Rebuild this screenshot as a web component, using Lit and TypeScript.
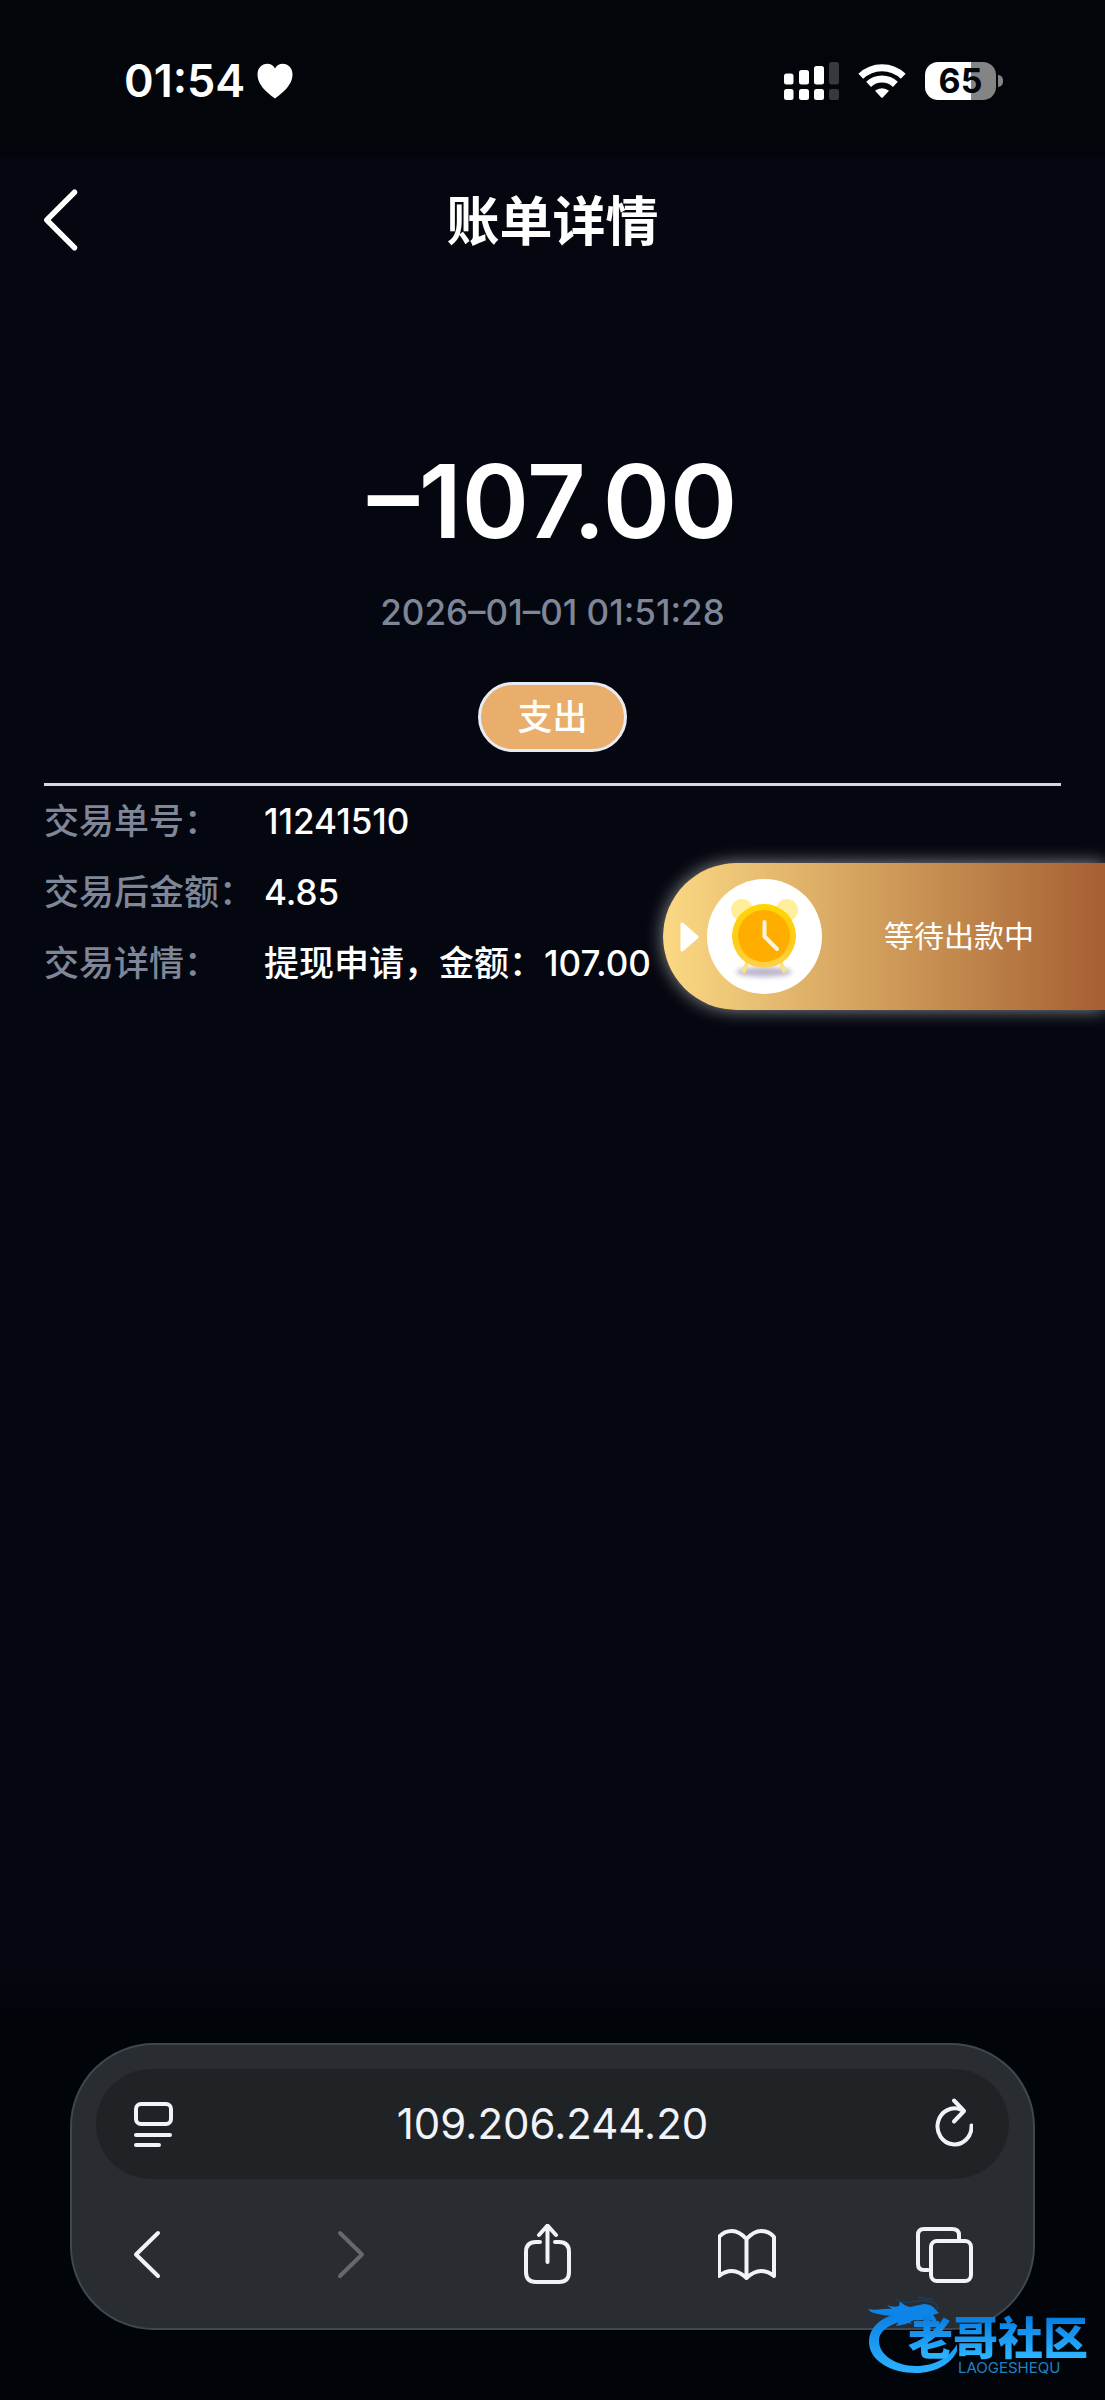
import { LitElement, html, svg, css } from "lit";
import { customElement } from "lit/decorators.js";

const chevronLeft = svg`<path d="M25.500 9.500 5 30 25.500 50.500" />`;

@customElement("status-bar")
class StatusBar extends LitElement {
  static styles = css`
    :host {
      display: flex;
      align-items: center;
      justify-content: space-between;
      height: 156px;
      padding: 6px 102px 0 124px;
      box-sizing: border-box;
      background: #02050a;
      color: #fff;
    }
    .left,
    .right {
      display: flex;
      align-items: center;
    }
    .left {
      gap: 12px;
    }
    .right {
      gap: 19px;
    }
    .time {
      font-size: 45px;
      line-height: 56px;
      font-weight: 600;
    }
    svg {
      display: block;
    }
    .battery {
      display: flex;
      align-items: center;
      gap: 2px;
    }
    .cell {
      width: 71px;
      height: 38px;
      border-radius: 13px;
      background: linear-gradient(90deg, #fff 65%, #848485 65%);
      color: #02050a;
      font-size: 34px;
      line-height: 38px;
      font-weight: 700;
      text-align: center;
    }
    .knob {
      width: 5px;
      height: 12px;
      border-radius: 0 6px 6px 0;
      background: #848485;
    }
  `;

  render() {
    return html`
      <div class="left">
        <span class="time">01:54</span>
        <svg width="36" height="36" viewBox="0 0 36 36" aria-hidden="true">
          <path
            fill="#fff"
            d="M18 35.500C15 33 0.500 24 0.500 11.500C0.500 5 4.800 0.700 10.300 0.700C13.800 0.700 16.600 2.500 18 5.600C19.400 2.500 22.200 0.700 25.700 0.700C31.200 0.700 35.500 5 35.500 11.500C35.500 24 21 33 18 35.500Z"
          />
        </svg>
      </div>
      <div class="right">
        <svg width="55" height="38" viewBox="0 0 55 38" aria-hidden="true">
          <g fill="#fff">
            <rect x="0" y="11.500" width="9.500" height="11" rx="2.500" />
            <rect x="15" y="8" width="10" height="14.500" rx="2.500" />
            <rect x="30" y="4" width="10" height="18.500" rx="2.500" />
            <rect x="0" y="27" width="9.500" height="11" rx="2.500" />
            <rect x="15" y="27" width="10" height="11" rx="2.500" />
            <rect x="30" y="27" width="10" height="11" rx="2.500" />
          </g>
          <g fill="#38393d">
            <rect x="45" y="0" width="10" height="22.500" rx="2.500" />
            <rect x="45" y="27" width="10" height="11" rx="2.500" />
          </g>
        </svg>
        <svg width="48" height="36" viewBox="0 0 48 36" aria-hidden="true">
          <g fill="none" stroke="#fff" stroke-width="7">
            <path d="M2.800 13.200A30.500 30.500 0 0 1 45.200 13.200" />
            <path d="M10.600 21.400A19.500 19.500 0 0 1 37.400 21.400" />
          </g>
          <path fill="#fff" d="M17 27.800A10.500 10.500 0 0 1 31 27.800L25 34.300Q24 35.300 23 34.300Z" />
        </svg>
        <div class="battery">
          <div class="cell">65</div>
          <div class="knob"></div>
        </div>
      </div>
    `;
  }
}

@customElement("payout-badge")
class PayoutBadge extends LitElement {
  static styles = css`
    :host {
      display: block;
    }
    .badge {
      display: flex;
      align-items: center;
      width: 442px;
      height: 147px;
      padding: 0 0 0 17px;
      border: 0;
      border-radius: 74px 0 0 74px;
      background: linear-gradient(90deg, #fbd983, #a55f32);
      box-shadow: 0 0 18px rgba(255, 255, 255, 0.55);
      color: #fff;
      font-family: inherit;
      font-size: 30px;
      line-height: 40px;
      font-weight: 400;
      text-align: left;
    }
    .arrow {
      margin-right: 8px;
    }
    .disc {
      display: block;
      width: 115px;
      height: 115px;
      margin-right: 62px;
      border-radius: 50%;
      background: #fff;
    }
    .label {
      padding-bottom: 2px;
      white-space: nowrap;
    }
  `;

  render() {
    return html`
      <button class="badge" type="button">
        <svg class="arrow" width="19" height="32" viewBox="0 0 19 32" aria-hidden="true">
          <path d="M2 3 17 16 2 29Z" fill="#fff" stroke="#fff" stroke-width="3" stroke-linejoin="round" />
        </svg>
        <svg class="disc" viewBox="0 0 115 115" aria-hidden="true">
          <defs>
            <filter id="soft" x="-30%" y="-80%" width="160%" height="260%">
              <feGaussianBlur stdDeviation="2.500" />
            </filter>
            <linearGradient id="rim" x1="0" y1="0" x2="0" y2="1">
              <stop offset="0" stop-color="#ffd500" />
              <stop offset="0.600" stop-color="#fecb1a" />
              <stop offset="1" stop-color="#ffd24f" />
            </linearGradient>
          </defs>
          <ellipse cx="57" cy="93" rx="28" ry="5" fill="#bdb6cd" filter="url(#soft)" />
          <circle cx="35" cy="31" r="11" fill="#ffef9a" />
          <circle cx="80" cy="31" r="11" fill="#ffef9a" />
          <path d="M40 84 37 92M74 84 77 92" stroke="#fbe27c" stroke-width="4" stroke-linecap="round" />
          <circle cx="57" cy="57" r="32" fill="url(#rim)" />
          <circle cx="57" cy="57" r="26" fill="#ffae00" />
          <path
            d="M57.500 43V57.500L70 70"
            fill="none"
            stroke="#fff3dc"
            stroke-width="4"
            stroke-linecap="round"
            stroke-linejoin="round"
          />
        </svg>
        <span class="label">等待出款中</span>
      </button>
    `;
  }
}

@customElement("browser-bar")
class BrowserBar extends LitElement {
  static styles = css`
    :host {
      display: block;
      padding: 0 70px;
    }
    .panel {
      padding: 24px 24px 44px;
      border: 2px solid #3f4751;
      border-radius: 84px;
      background: #292c31;
    }
    .address {
      display: flex;
      align-items: center;
      height: 110px;
      padding: 0 36px;
      box-sizing: border-box;
      border-radius: 55px;
      background: #202326;
    }
    .url {
      flex: 1;
      min-width: 0;
      padding: 0;
      border: 0;
      background: none;
      color: #f1f3f9;
      font-family: inherit;
      font-size: 42px;
      line-height: 56px;
      text-align: center;
    }
    .tools {
      display: flex;
      justify-content: space-between;
      padding: 45px 36px 0;
    }
    button {
      padding: 0;
      border: 0;
      background: none;
      color: #f1f3f9;
    }
    button:disabled {
      color: #65686c;
    }
    svg {
      display: block;
      fill: none;
      stroke: currentColor;
      stroke-width: 4;
      stroke-linecap: round;
      stroke-linejoin: round;
    }
  `;

  private icon(label: string, shape: unknown, disabled = false) {
    return html`<button type="button" aria-label=${label} ?disabled=${disabled}>
      <svg width="60" height="60" viewBox="0 0 60 60">${shape}</svg>
    </button>`;
  }

  render() {
    return html`
      <div class="panel">
        <div class="address">
          ${this.icon(
            "页面菜单",
            svg`<rect x="4" y="10" width="35" height="20" rx="5" /><path d="M4 41H38M4 51H27" />`
          )}
          <input class="url" type="text" aria-label="地址" value="109.206.244.20" />
          ${this.icon(
            "重新载入",
            svg`<path d="M58.500 31.500A17 18 0 1 1 48.500 16" /><path d="M41 6.500 51 17 41 27.500" />`
          )}
        </div>
        <div class="tools">
          ${this.icon("后退", svg`<path d="M26 9 4 30.500 26 52" />`)}
          ${this.icon("前进", svg`<path d="M13 9 35 30.500 13 52" />`, true)}
          ${this.icon(
            "分享",
            svg`<path d="M17 18H13Q3 18 3 28V48Q3 58 13 58H36Q46 58 46 48V28Q46 18 36 18H32" /><path d="M24.500 38V2M16 11 24.500 1.500 33 11" />`
          )}
          ${this.icon(
            "书签",
            svg`<path d="M27.500 15Q20 7 13 7Q5 7 0 13V52Q6 47 13 47Q20 47 27.500 54Q35 47 42 47Q49 47 55 52V13Q50 7 42 7Q35 7 27.500 15V54" transform="translate(1 0)" />`
          )}
          ${this.icon(
            "标签页",
            svg`<path d="M15 46H11Q5 46 5 40V11Q5 5 11 5H39Q46 5 46 11V16" /><rect x="18" y="17" width="40" height="40" rx="6" />`
          )}
        </div>
      </div>
    `;
  }
}

@customElement("community-mark")
class CommunityMark extends LitElement {
  static styles = css`
    :host {
      display: grid;
      color: #1d9af2;
    }
    .dragon,
    .words {
      grid-area: 1 / 1;
    }
    .words {
      padding: 16px 0 0 42px;
      white-space: nowrap;
    }
    .name {
      font-family: "Noto Sans CJK SC", sans-serif;
      font-size: 45px;
      line-height: 48px;
      font-weight: 900;
      background: linear-gradient(180deg, #0a7fe2 15%, #2bb2ff 90%);
      -webkit-background-clip: text;
      background-clip: text;
      color: transparent;
    }
    .latin {
      padding-left: 50px;
      font-size: 15px;
      line-height: 16px;
      color: #1f82c6;
    }
  `;

  render() {
    return html`
      <svg class="dragon" width="96" height="80" viewBox="0 0 96 80" aria-hidden="true">
        <defs>
          <linearGradient id="body" x1="0" y1="0" x2="0" y2="1">
            <stop offset="0" stop-color="#0a7fe2" />
            <stop offset="1" stop-color="#2bb2ff" />
          </linearGradient>
        </defs>
        <path
          fill="url(#body)"
          d="M35 17C16 20 3 31 3 46C3 64 24 77 50 77C70 77 86 67 91 55L91 48C84 61 69 70 50 70C30 70 13 59 13 45C13 34 25 28 37 25L46 28Z"
        />
        <path
          fill="#0c84e8"
          d="M2 13C10 15 18 12 26 13L21 9Q28 12 33 10L34 5Q38 10 44 11L58 8Q66 8 70 14L73 17L67 19Q70 22 71 26L60 23Q54 25 48 24L40 28L30 30L34 24L24 27L30 20Q18 20 8 17Q4 16 2 13Z"
        />
        <path
          fill="none"
          stroke="#12486f"
          d="M30 3Q36 8 46 6Q57 3 66 6Q73 8 71 14M52 1Q60 4 67 3"
        />
      </svg>
      <div class="words">
        <div class="name">老哥社区</div>
        <div class="latin">LAOGESHEQU</div>
      </div>
    `;
  }
}

@customElement("app-root")
class AppRoot extends LitElement {
  static styles = css`
    :host {
      display: block;
      font-family: Inter, "Noto Sans CJK SC", sans-serif;
      color: #fff;
    }
    .page {
      position: relative;
      display: flex;
      flex-direction: column;
      min-height: 100vh;
      box-sizing: border-box;
      padding-bottom: 70px;
      overflow: hidden;
      background: linear-gradient(0deg, #010409 370px, #04070f 430px);
    }
    .header {
      display: grid;
      grid-template-columns: 60px 1fr 60px;
      align-items: center;
      height: 128px;
      padding: 0 40px;
    }
    .back {
      padding: 0;
      border: 0;
      background: none;
      color: #fff;
    }
    .back svg {
      display: block;
      fill: none;
      stroke: currentColor;
      stroke-width: 4;
      stroke-linecap: round;
      stroke-linejoin: round;
    }
    .title {
      margin: 0;
      padding-top: 4px;
      font-size: 53px;
      line-height: 72px;
      font-weight: 600;
      text-align: center;
    }
    .summary {
      display: flex;
      flex-direction: column;
      align-items: center;
      margin: 0 44px;
      padding: 157px 0 31px;
      border-bottom: 3px solid #d6d7e1;
    }
    .amount {
      font-size: 102px;
      line-height: 120px;
      font-weight: 600;
    }
    .date {
      margin: 27px 0 46px;
      font-size: 35px;
      line-height: 48px;
      font-weight: 500;
      color: #7f8697;
    }
    .kind {
      padding: 0 36px;
      border: 3px solid #e8ebf1;
      border-radius: 35px;
      background: #e9ae6b;
      font-size: 35px;
      line-height: 64px;
      font-weight: 500;
    }
    .details {
      display: grid;
      grid-template-columns: 220px 1fr;
      margin: 0 44px;
      font-size: 35px;
      line-height: 71px;
      font-weight: 500;
    }
    .details dt {
      color: #7f8697;
      white-space: nowrap;
    }
    .details dd {
      margin: 0;
    }
    .browser {
      margin-top: auto;
    }
    .floating {
      position: absolute;
      top: 863px;
      right: 0;
    }
    .mark {
      position: absolute;
      right: 17px;
      bottom: 24px;
    }
  `;

  private rows = [
    ["交易单号：", "11241510"],
    ["交易后金额：", "4.85"],
    ["交易详情：", "提现申请，金额：107.00"],
  ];

  render() {
    return html`
      <div class="page" lang="zh-CN">
        <status-bar></status-bar>
        <header class="header">
          <button class="back" type="button" aria-label="返回">
            <svg width="42" height="78" viewBox="0 4 31 52">${chevronLeft}</svg>
          </button>
          <h1 class="title">账单详情</h1>
        </header>
        <section class="summary">
          <div class="amount">–107.00</div>
          <div class="date">2026–01–01 01:51:28</div>
          <div class="kind">支出</div>
        </section>
        <dl class="details">
          ${this.rows.map(([name, value]) => html`<dt>${name}</dt><dd>${value}</dd>`)}
        </dl>
        <browser-bar class="browser"></browser-bar>
        <payout-badge class="floating"></payout-badge>
        <community-mark class="mark"></community-mark>
      </div>
    `;
  }
}
